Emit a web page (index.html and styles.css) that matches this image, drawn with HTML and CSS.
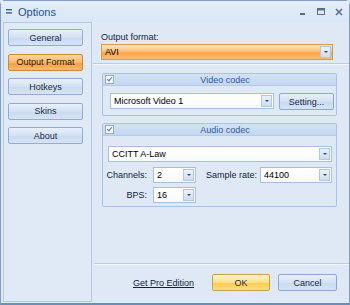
FILE: index.html
```html
<!DOCTYPE html>
<html lang="en">

<head>
    <meta charset="UTF-8">
    <meta name="viewport" content="width=device-width, initial-scale=1.0">
    <title>Options</title>
    <link rel="stylesheet" href="styles.css">
</head>

<body>
    <div class="window">
        <!-- Title bar -->
        <div class="titlebar">
            <svg class="sysmenu" width="6" height="5" viewBox="0 0 6 5">
                <rect x="0" y="0" width="6" height="1.4" fill="#3c5f92"/>
                <rect x="0" y="3.2" width="6" height="1.4" fill="#3c5f92"/>
            </svg>
            <span class="title">Options</span>
            <div class="controls">
                <svg width="8" height="8" viewBox="0 0 8 8"><rect x="1" y="5" width="5" height="2" fill="#5a6f8c"/></svg>
                <svg width="8" height="8" viewBox="0 0 8 8"><rect x="0.5" y="0.5" width="7" height="6" fill="none" stroke="#5a6f8c"/><rect x="0.5" y="0.5" width="7" height="2" fill="#5a6f8c"/></svg>
                <svg width="8" height="8" viewBox="0 0 8 8"><path d="M1 1 L7 7 M7 1 L1 7" stroke="#5a6f8c" stroke-width="1.6"/></svg>
            </div>
        </div>

        <div class="main">
            <!-- Page list -->
            <div class="sidebar">
                <div class="nav-btn">General</div>
                <div class="nav-btn active">Output Format</div>
                <div class="nav-btn">Hotkeys</div>
                <div class="nav-btn">Skins</div>
                <div class="nav-btn">About</div>
            </div>

            <!-- Output format page -->
            <div class="content">
                <div class="format-block">
                    <div class="label">Output format:</div>
                    <div class="combo combo-orange">
                        <span class="combo-text">AVI</span>
                        <span class="drop"><i></i></span>
                    </div>
                </div>
                <div class="rule"></div>

                <div class="group video-group">
                    <div class="group-head">
                        <span class="check"></span>
                        <span class="group-title">Video codec</span>
                    </div>
                    <div class="video-row">
                        <div class="combo video-combo">
                            <span class="combo-text">Microsoft Video 1</span>
                            <span class="drop"><i></i></span>
                        </div>
                        <div class="btn setting-btn">Setting...</div>
                    </div>
                </div>

                <div class="group audio-group">
                    <div class="group-head">
                        <span class="check"></span>
                        <span class="group-title">Audio codec</span>
                    </div>
                    <div class="combo audio-combo">
                        <span class="combo-text">CCITT A-Law</span>
                        <span class="drop"><i></i></span>
                    </div>
                    <div class="field-row">
                        <span class="field-label">Channels:</span>
                        <div class="combo small-combo">
                            <span class="combo-text">2</span>
                            <span class="drop"><i></i></span>
                        </div>
                        <span class="field-label rate-label">Sample rate:</span>
                        <div class="combo rate-combo">
                            <span class="combo-text">44100</span>
                            <span class="drop"><i></i></span>
                        </div>
                    </div>
                    <div class="field-row">
                        <span class="field-label">BPS:</span>
                        <div class="combo small-combo">
                            <span class="combo-text">16</span>
                            <span class="drop"><i></i></span>
                        </div>
                    </div>
                </div>

                <div class="spacer"></div>
                <div class="rule bottom-rule"></div>
                <div class="footer">
                    <span class="pro-link">Get Pro Edition</span>
                    <div class="btn ok-btn">OK</div>
                    <div class="btn cancel-btn">Cancel</div>
                </div>
            </div>
        </div>
    </div>
</body>

</html>
```

FILE: styles.css
```css
/* Basic page */
body {
    margin: 0;
    font-family: "Liberation Sans", Arial, sans-serif;
    font-size: 9px;
    color: #000;
    background: #dfe9f5;
}

/* Window frame */
.window {
    width: 350px;
    height: 305px;
    box-sizing: border-box;
    border: 1px solid #7f9cc6;
    border-bottom: 2px solid #6f8db9;
    border-radius: 5px 5px 0 0;
    background: #dfe9f5;
    display: flex;
    flex-direction: column;
}

/* Title bar */
.titlebar {
    height: 21px;
    display: flex;
    align-items: center;
    background: linear-gradient(#e4eefa, #d9e6f6);
}

.sysmenu {
    margin-left: 5px;
    margin-right: 6px;
}

.title {
    font-size: 11px;
    color: #1f4f8f;
}

.controls {
    margin-left: auto;
    display: flex;
    gap: 10px;
    margin-right: 6px;
}

/* Main area */
.main {
    flex: 1;
    display: flex;
    padding-bottom: 1px;
}

.sidebar {
    width: 89px;
    box-sizing: border-box;
    margin-left: 2px;
    border: 1px solid #b6c9e2;
    background: #e0eaf7;
    padding: 6px 0 0 4px;
    display: flex;
    flex-direction: column;
    gap: 7.5px;
}

.nav-btn {
    width: 75px;
    height: 17px;
    box-sizing: border-box;
    border: 1px solid #93acd0;
    border-radius: 2px;
    background: linear-gradient(#e8f0fa, #d3e1f3 50%, #c9daef 51%, #d6e3f4);
    display: flex;
    align-items: center;
    justify-content: center;
    color: #1b2a44;
}

.nav-btn.active {
    border-color: #c98b3c;
    background: linear-gradient(#fdd7a0, #fbb867 50%, #f89c3c 51%, #fbb968);
    color: #2b1a08;
}

/* Right hand content */
.content {
    flex: 1;
    display: flex;
    flex-direction: column;
}

.format-block {
    padding: 9px 0 0 9px;
}

.label {
    height: 13px;
    line-height: 13px;
    color: #10233f;
}

/* Combo boxes */
.combo {
    height: 16px;
    box-sizing: border-box;
    border: 1px solid #a9bfdc;
    background: linear-gradient(#ffffff, #f7fafd);
    display: flex;
    align-items: center;
    flex-shrink: 0;
}

.combo-text {
    flex: 1;
    padding-left: 3px;
    white-space: nowrap;
}

.drop {
    width: 11px;
    height: 12px;
    margin-right: 1px;
    box-sizing: border-box;
    border: 1px solid #b3c6df;
    background: linear-gradient(#eaf1fa, #cfdcee);
    display: flex;
    align-items: center;
    justify-content: center;
}

.drop i {
    width: 0;
    height: 0;
    border-left: 2px solid transparent;
    border-right: 2px solid transparent;
    border-top: 2px solid #34496b;
}

.combo-orange {
    width: 232px;
    border-color: #d89a4c;
    background: linear-gradient(#fde6bf, #fcc27a 45%, #f9a449 55%, #fbbd72);
}

.rule {
    height: 1px;
    background: #b8cce6;
    margin: 3px 0 0 1px;
    border-bottom: 1px solid #f2f6fc;
}

/* Group boxes */
.group {
    width: 235px;
    box-sizing: border-box;
    margin-left: 10px;
    border: 1px solid #a9c2e3;
    border-radius: 2px;
    background: #dfe9f5;
}

.video-group {
    margin-top: 8px;
    height: 43px;
}

.audio-group {
    margin-top: 7px;
    height: 84px;
}

.group-head {
    height: 11px;
    display: flex;
    align-items: center;
    background: linear-gradient(#d3e2f5, #c3d7f0);
    border-bottom: 1px solid #b4cae6;
}

.check {
    width: 7px;
    height: 7px;
    margin-left: 2px;
    border: 1px solid #97aac4;
    background: #f4f7fb;
    position: relative;
}

.check::after {
    content: "";
    position: absolute;
    left: 2px;
    top: 0;
    width: 2px;
    height: 4px;
    border-right: 1px solid #6a7a90;
    border-bottom: 1px solid #6a7a90;
    transform: rotate(40deg);
}

.group-title {
    flex: 1;
    text-align: center;
    color: #2f5b95;
}

.video-row {
    display: flex;
    align-items: flex-start;
    padding: 7px 0 0 7px;
}

.video-combo {
    width: 164px;
}

/* Buttons */
.btn {
    height: 17px;
    box-sizing: border-box;
    border: 1px solid #8ea7cb;
    border-radius: 2px;
    background: linear-gradient(#e8f0fa, #d3e1f3 50%, #c9daef 51%, #d6e3f4);
    display: flex;
    align-items: center;
    justify-content: center;
    color: #1b2a44;
}

.setting-btn {
    width: 55px;
    margin-left: 5px;
}

.audio-combo {
    width: 224px;
    margin: 10px 0 0 5px;
}

.field-row {
    display: flex;
    align-items: center;
    margin-top: 5px;
}

.field-row + .field-row {
    margin-top: 4px;
}

.field-label {
    width: 50px;
    flex-shrink: 0;
    box-sizing: border-box;
    text-align: right;
    padding-right: 6px;
    white-space: nowrap;
    color: #10233f;
}

.small-combo {
    width: 43px;
}

.rate-label {
    width: 54px;
    margin-left: 10px;
    padding-right: 3px;
}

.rate-combo {
    width: 72px;
}

.spacer {
    flex: 1;
}

.bottom-rule {
    margin: 0 0 0 2px;
}

/* Footer */
.footer {
    height: 37px;
    display: flex;
    align-items: center;
    padding-bottom: 2px;
    box-sizing: border-box;
}

.pro-link {
    margin-left: 41px;
    text-decoration: underline;
    color: #10233f;
}

.ok-btn {
    width: 58px;
    margin-left: 18px;
    border-color: #c2a255;
    background: linear-gradient(#fff3c8, #ffe08a 50%, #fdcb4f 51%, #fddc7d);
}

.cancel-btn {
    width: 59px;
    margin-left: 8px;
}
```
